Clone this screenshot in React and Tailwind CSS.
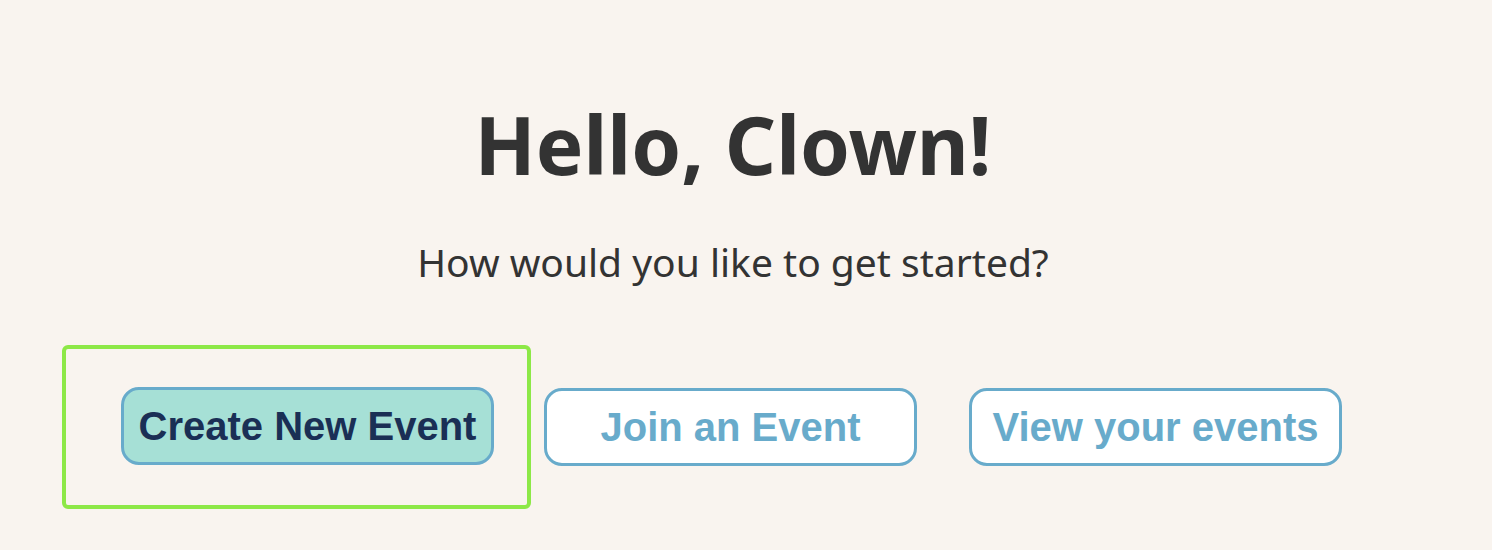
import React from "react";

const ActionButton = ({ children, primary }) => (
  <button
    className={`w-[373px] h-[78px] rounded-[18px] border-[3px] border-[#68abcb] text-[40px] font-bold leading-none ${
      primary ? "bg-[#a6e0d6] text-[#1a2f55]" : "bg-white text-[#68abcb]"
    }`}
    style={{ fontFamily: '"Liberation Sans", Arial, sans-serif' }}
  >
    {children}
  </button>
);

export default function App() {
  return (
    <div
      className="min-h-[550px] bg-[#f9f4ef] pt-[104px] text-[#333333]"
      style={{ fontFamily: '"Noto Sans", sans-serif' }}
    >
      <h1 className="text-center text-[80px] font-bold leading-none ml-[-26px]">
        Hello, Clown!
      </h1>
      <p className="mt-[58px] text-center text-[39px] leading-none ml-[-26px]">
        How would you like to get started?
      </p>

      <div className="mt-[64px] flex items-center pl-[62px]">
        <div className="rounded-md border-4 border-[#8de847] pl-[55px] pr-[33px] pt-[38px] pb-[40px]">
          <ActionButton primary>Create New Event</ActionButton>
        </div>
        <div className="ml-[13px] flex gap-[52px]">
          <ActionButton>Join an Event</ActionButton>
          <ActionButton>View your events</ActionButton>
        </div>
      </div>
    </div>
  );
}
